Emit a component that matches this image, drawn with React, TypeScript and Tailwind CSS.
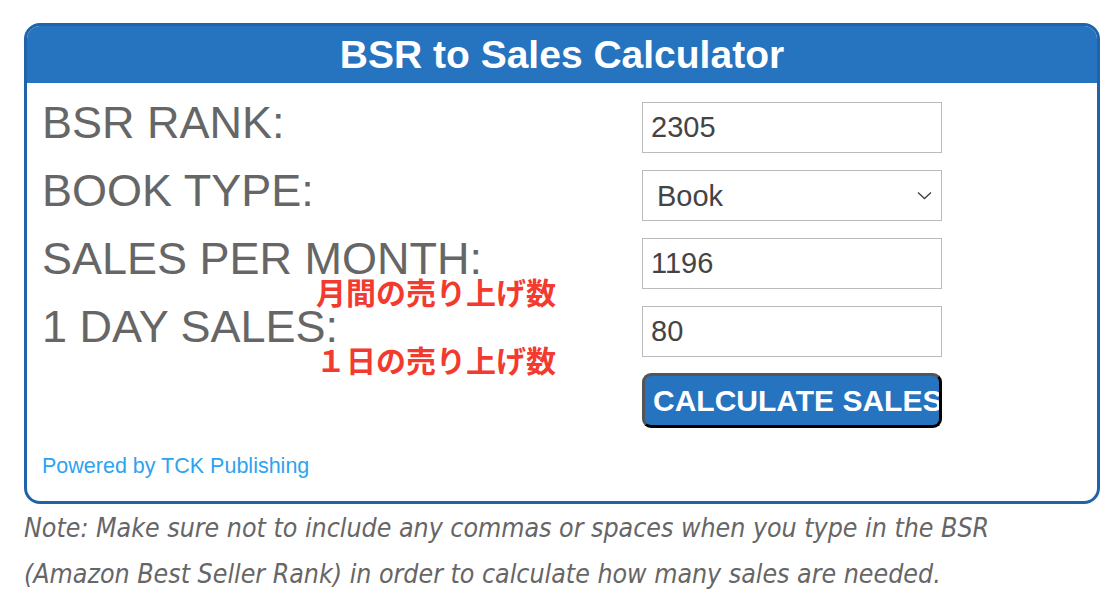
import { useState } from "react";

const LABEL = "text-[45px] leading-[41px] text-[#666] whitespace-nowrap";
const FIELD =
  "w-[300px] h-[51px] border border-[#bbb] bg-white pl-2 text-[29px] text-[#444] outline-none";

export default function App() {
  const [rank, setRank] = useState("2305");
  const [type, setType] = useState("Book");

  return (
    <div className="min-h-screen bg-white pt-[23px] pl-[24px] font-['Liberation_Sans',Arial,sans-serif]">
      {/* ================= CARD ================= */}
      <div className="relative w-[1076px] border-[3px] border-[#1f64a8] rounded-[16px] overflow-hidden">
        <div className="h-[57px] bg-[#2673bf] flex items-center justify-center">
          <h1 className="text-[39px] font-bold text-white leading-none">BSR to Sales Calculator</h1>
        </div>

        <div className="pt-[19px] pl-[15px] pb-[23px]">
          <div className="flex flex-col gap-[17px]">
            <div className="flex items-start">
              <div className={`w-[600px] ${LABEL}`}>BSR RANK:</div>
              <input className={FIELD} value={rank} onChange={(e) => setRank(e.target.value)} />
            </div>

            <div className="flex items-start">
              <div className={`w-[600px] ${LABEL}`}>BOOK TYPE:</div>
              <div className="relative">
                <select
                  className={`${FIELD} appearance-none pl-[14px] pt-[2px]`}
                  value={type}
                  onChange={(e) => setType(e.target.value)}
                >
                  <option>Book</option>
                  <option>eBook</option>
                </select>
                <svg
                  className="absolute right-[10px] top-[21px] pointer-events-none"
                  width="15"
                  height="9"
                  viewBox="0 0 15 9"
                  fill="none"
                  stroke="#444"
                  strokeWidth="1.4"
                >
                  <path d="M1 1.5l6.5 6 6.5-6" />
                </svg>
              </div>
            </div>

            <div className="flex items-start">
              <div className={`w-[600px] ${LABEL}`}>SALES PER MONTH:</div>
              <input className={FIELD} defaultValue="1196" />
            </div>

            <div className="flex items-start">
              <div className={`w-[600px] ${LABEL}`}>1 DAY SALES:</div>
              <input className={FIELD} defaultValue="80" />
            </div>

            <div className="flex -mt-[1px]">
              <div className="w-[600px]" />
              <button className="w-[300px] h-[55px] rounded-[9px] bg-[#2673bf] border-[3px] border-t-[#555] border-l-[#555] border-r-black border-b-black pl-[8px] text-left overflow-hidden whitespace-nowrap text-[30px] font-bold text-white leading-none">
                CALCULATE SALES
              </button>
            </div>
          </div>

          <a href="#" className="block mt-[26px] text-[21.5px] leading-[24px] text-[#2ea3ef]">
            Powered by TCK Publishing
          </a>
        </div>

        {/* ================= ANNOTATIONS ================= */}
        <div className="absolute left-[289px] top-[250px] text-[30px] leading-none font-bold text-[#f23a2f] font-['Noto_Sans_CJK_JP',sans-serif]">
          月間の売り上げ数
        </div>
        <div className="absolute left-[289px] top-[318px] text-[30px] leading-none font-bold text-[#f23a2f] font-['Noto_Sans_CJK_JP',sans-serif]">
          １日の売り上げ数
        </div>
      </div>

      {/* ================= NOTE ================= */}
      <p className="mt-[1px] w-[1076px] italic text-[26.5px] leading-[46px] text-[#666] font-['DejaVu_Sans_Condensed','DejaVu_Sans',sans-serif]">
        Note: Make sure not to include any commas or spaces when you type in the BSR
        <br />
        (Amazon Best Seller Rank) in order to calculate how many sales are needed.
      </p>
    </div>
  );
}
